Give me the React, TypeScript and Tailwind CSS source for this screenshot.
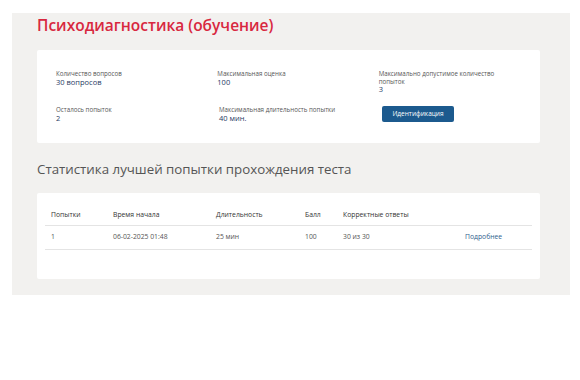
import React from 'react';

interface InfoItem {
  label: string;
  value: string;
}

const row1: InfoItem[] = [
  { label: 'Количество вопросов', value: '30 вопросов' },
  { label: 'Максимальная оценка', value: '100' },
  { label: 'Максимально допустимое количество попыток', value: '3' },
];

const row2: InfoItem[] = [
  { label: 'Осталось попыток', value: '2' },
  { label: 'Максимальная длительность попытки', value: '40 мин.' },
];

const cols = 'grid grid-cols-[62px_103px_89px_38px_122px_73px]';

function Info({ item }: { item: InfoItem }) {
  return (
    <div className="w-[163px] pr-[36px]">
      <div className="text-[6.2px] leading-[7.5px] text-[#555]">{item.label}</div>
      <div className="text-[7.5px] leading-[9px] text-[#1f3b63] font-medium">{item.value}</div>
    </div>
  );
}

export default function App() {
  return (
    <div
      className="w-[580px] h-[380px] bg-white pt-[13px] pl-[12px] pr-[10px]"
      style={{ fontFamily: '"Open Sans", "Noto Sans", sans-serif' }}
    >
      <div className="bg-[#f2f1ef] pl-[25px] pr-[30px] pt-[2px] pb-[16px]">
        {/* Title */}
        <h1 className="text-[15.5px] leading-[20px] font-semibold text-[#d8283f]">
          Психодиагностика (обучение)
        </h1>

        {/* Test info */}
        <div className="mt-[15px] bg-white rounded-[2px] pl-[19px] pt-[20px] pb-[20px] h-[93px]">
          <div className="flex">
            {row1.map((it) => (
              <Info key={it.label} item={it} />
            ))}
          </div>
          <div className="flex mt-[12px]">
            {row2.map((it) => (
              <Info key={it.label} item={it} />
            ))}
            <button className="h-[16px] w-[72px] rounded-[2px] bg-[#1c5a8e] text-white text-[6.5px] font-medium">
              Идентификация
            </button>
          </div>
        </div>

        {/* Best attempt */}
        <h2 className="mt-[16px] text-[13.3px] leading-[20px] text-[#555]">
          Статистика лучшей попытки прохождения теста
        </h2>

        <div className="mt-[14px] bg-white rounded-[2px] px-[8px] pt-[12px] pb-[29px]">
          <div className={`${cols} h-[21px] items-center border-b border-[#e4e4e4] text-[6.8px] text-[#333] font-medium`}>
            <div className="pl-[6px]">Попытки</div>
            <div className="pl-[6px]">Время начала</div>
            <div className="pl-[6px]">Длительность</div>
            <div className="pl-[6px]">Балл</div>
            <div className="pl-[6px]">Корректные ответы</div>
            <div />
          </div>
          <div className={`${cols} h-[24px] items-center border-b border-[#e4e4e4] text-[6.8px] text-[#555]`}>
            <div className="pl-[6px]">1</div>
            <div className="pl-[6px]">06-02-2025 01:48</div>
            <div className="pl-[6px]">25 мин</div>
            <div className="pl-[6px]">100</div>
            <div className="pl-[6px]">30 из 30</div>
            <div className="pl-[6px] text-[#2f5f8f]">Подробнее</div>
          </div>
        </div>
      </div>
    </div>
  );
}
